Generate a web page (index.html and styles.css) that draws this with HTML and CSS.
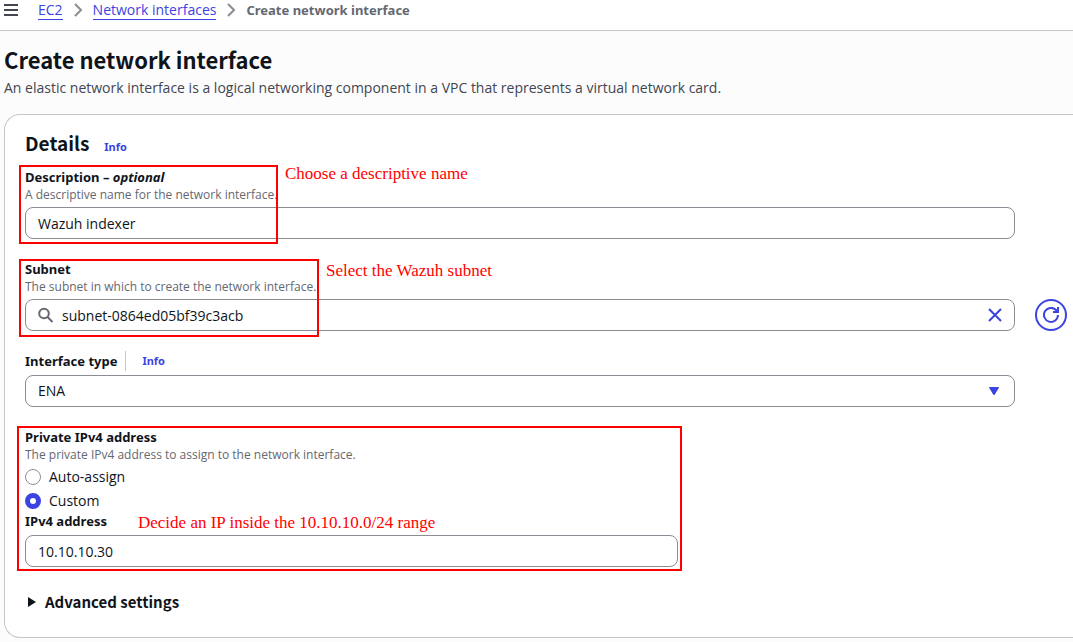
FILE: index.html
```html
<!DOCTYPE html>
<html lang="en">
<head>
<meta charset="utf-8">
<title>Create network interface</title>
<link rel="stylesheet" href="styles.css">
</head>
<body>
<header class="topbar">
  <button class="icon-button" type="button" aria-label="Open navigation">
    <svg width="14" height="14" viewBox="0 0 14 14" stroke="#424650" stroke-width="2"><path d="M0 2h14M0 7h14M0 12h14"/></svg>
  </button>
  <nav class="crumbs" aria-label="Breadcrumbs">
    <a href="#">EC2</a>
    <svg class="chevron" width="8" height="14" viewBox="0 0 8 14"><path d="M1 1l6 6-6 6"/></svg>
    <a href="#">Network interfaces</a>
    <svg class="chevron" width="8" height="14" viewBox="0 0 8 14"><path d="M1 1l6 6-6 6"/></svg>
    <span class="current">Create network interface</span>
  </nav>
</header>
<main class="page">
  <h1 class="title">Create network interface</h1>
  <p class="intro">An elastic network interface is a logical networking component in a VPC that represents a virtual network card.</p>
  <form class="card">
    <div class="card-head"><h2 class="card-title">Details</h2><a class="info" href="#">Info</a></div>
    <div class="field marked">
      <label class="label" for="description">Description – <i>optional</i></label>
      <p class="hint">A descriptive name for the network interface.</p>
      <div class="row"><input class="control" id="description" type="text" value="Wazuh indexer"></div>
      <span class="frame frame-description"></span>
      <span class="note note-description">Choose a descriptive name</span>
    </div>
    <div class="field marked">
      <label class="label" for="subnet">Subnet</label>
      <p class="hint">The subnet in which to create the network interface.</p>
      <div class="row">
        <div class="control search">
          <svg width="16" height="16" viewBox="0 0 16 16" fill="none" stroke="#656871" stroke-width="2"><circle cx="6" cy="6.5" r="4.8"/><path d="M9.5 10l5 5"/></svg>
          <input class="bare" id="subnet" type="text" value="subnet-0864ed05bf39c3acb">
          <button class="icon-button" type="button" aria-label="Clear">
            <svg width="14" height="14" viewBox="0 0 14 14" stroke="#3b43e0" stroke-width="2"><path d="M1 1l12 12M13 1L1 13"/></svg>
          </button>
        </div>
        <button class="refresh" type="button" aria-label="Refresh">
          <svg width="16" height="16" viewBox="0 0 16 16" fill="none" stroke="#3b43e0" stroke-width="2"><path d="M15 8A7 7 0 1 1 13 3L15 5M15 0v5h-5"/></svg>
        </button>
      </div>
      <span class="frame frame-subnet"></span>
      <span class="note note-subnet">Select the Wazuh subnet</span>
    </div>
    <div class="field">
      <div class="label-row"><label class="label" for="type">Interface type</label><a class="info split" href="#">Info</a></div>
      <div class="row">
        <div class="select-wrap">
          <select class="control" id="type"><option>ENA</option></select>
          <svg class="caret" width="10" height="8" viewBox="0 0 10 8"><path d="M1 0h8q1.4 0 .8 1L5.8 7.4q-.8 1-1.6 0L.2 1Q-.4 0 1 0z" fill="#3b43e0"/></svg>
        </div>
      </div>
    </div>
    <div class="field marked">
      <fieldset class="group">
        <legend class="label">Private IPv4 address</legend>
        <p class="hint">The private IPv4 address to assign to the network interface.</p>
        <label class="choice"><input class="radio" type="radio" name="ip">Auto-assign</label>
        <label class="choice"><input class="radio" type="radio" name="ip" checked>Custom</label>
      </fieldset>
      <div class="address">
        <div class="label-row"><label class="label" for="address">IPv4 address</label></div>
        <div class="row narrow"><input class="control" id="address" type="text" value="10.10.10.30"></div>
      </div>
      <span class="frame frame-address"></span>
      <span class="note note-address">Decide an IP inside the 10.10.10.0/24 range</span>
    </div>
    <button class="expander" type="button"><svg width="8" height="10" viewBox="0 0 8 10"><path d="M0 0l8 5-8 5z" fill="#0f141a"/></svg>Advanced settings</button>
  </form>
</main>
</body>
</html>
```
FILE: styles.css
```css
* { box-sizing: border-box; }
body { margin: 0; background: #fcfcfd; color: #0f141a; font: 13px/18px "Noto Sans", "Open Sans", sans-serif; }
h1, h2, p { margin: 0; }
a { color: #3b43e0; }
button, input, select { font: inherit; color: inherit; }
.topbar { display: flex; align-items: center; gap: 20px; height: 31px; padding: 0 4px 10px; background: #fff; border-bottom: 1px solid #c6c6cd; }
.icon-button { display: flex; padding: 0; border: 0; background: none; }
.crumbs { display: flex; align-items: center; gap: 11px; }
.crumbs a { font: 14px/18px "Open Sans", sans-serif; text-decoration: none; border-bottom: 1px solid; }
.chevron { fill: none; stroke: #8c8c94; stroke-width: 2; }
.current { color: #656871; font-weight: 700; }
.page { padding: 14px 0 4px 4px; }
.title { font: 700 22px/28px "Noto Sans CJK SC", sans-serif; }
.intro { margin-top: 5px; font: 14px/20px "Open Sans", sans-serif; color: #424650; }
.card { margin-top: 16px; padding: 16px 6px 24px 20px; background: #fff; border: 1px solid #c6c6cd; border-right: 0; border-radius: 16px 0 0 16px; }
.card-head { display: flex; align-items: baseline; gap: 15px; margin-bottom: 12px; }
.card-title { font: 700 19px/24px "Noto Sans CJK SC", sans-serif; }
.info { font-size: 11px; font-weight: 700; text-decoration: none; }
.field { margin-bottom: 21px; }
.marked { position: relative; }
.label { display: block; padding: 0; font-weight: 700; }
.hint { margin-bottom: 3px; font: 12px/18px "Open Sans", sans-serif; color: #656871; }
.row { display: flex; gap: 20px; padding-right: 52px; }
.row:has(.refresh) { padding-right: 0; }
.control { flex: 1; width: 100%; min-width: 0; height: 32px; padding: 1px 12px 0; border: 1px solid #8c8c94; border-radius: 8px; background: #fff; font: 14px/18px "Open Sans", sans-serif; }
.search { display: flex; align-items: center; gap: 8px; padding-top: 0; }
.bare { flex: 1; min-width: 0; padding: 2px 0 0; border: 0; background: none; }
.refresh { display: flex; align-items: center; justify-content: center; width: 32px; height: 32px; padding: 0; border: 2px solid #3b43e0; border-radius: 50%; background: #fff; }
.label-row { display: flex; align-items: center; gap: 8px; height: 18px; margin-bottom: 5px; }
.split { padding-left: 16px; border-left: 1px solid #c6c6cd; line-height: 20px; }
.select-wrap { position: relative; flex: 1; }
.select-wrap .control { display: block; padding-top: 0; appearance: none; }
.caret { position: absolute; right: 16px; top: 12px; }
.group { min-width: 0; margin: 0; padding: 0; border: 0; }
.group .hint { margin-bottom: 1px; }
.choice { display: flex; align-items: center; gap: 8px; height: 24px; font: 14px/18px "Open Sans", sans-serif; }
.radio { appearance: none; width: 16px; height: 16px; margin: 0; border: 1px solid #8c8c94; border-radius: 50%; background: #fff; }
.radio:checked { border: 5px solid #3b43e0; }
.address { max-width: 653px; margin-top: -1px; }
.row.narrow { padding-right: 0; }
.frame { position: absolute; border: 2px solid #f00; pointer-events: none; }
.frame-description { left: -6px; top: -3px; width: 259px; height: 79px; }
.frame-subnet { left: -6px; top: -1px; width: 300px; height: 78px; }
.frame-address { left: -8px; top: -2px; width: 665px; height: 145px; }
.note { position: absolute; font: 17px/20px "Liberation Serif", serif; color: #f00; white-space: nowrap; }
.note-description { left: 260px; top: -4px; }
.note-subnet { left: 301px; top: 1px; }
.note-address { left: 113px; top: 85px; }
.expander { display: flex; align-items: center; gap: 9px; margin-top: 24px; padding: 0 3px; border: 0; background: none; font: 700 15px/22px "Noto Sans CJK SC", sans-serif; }
```
